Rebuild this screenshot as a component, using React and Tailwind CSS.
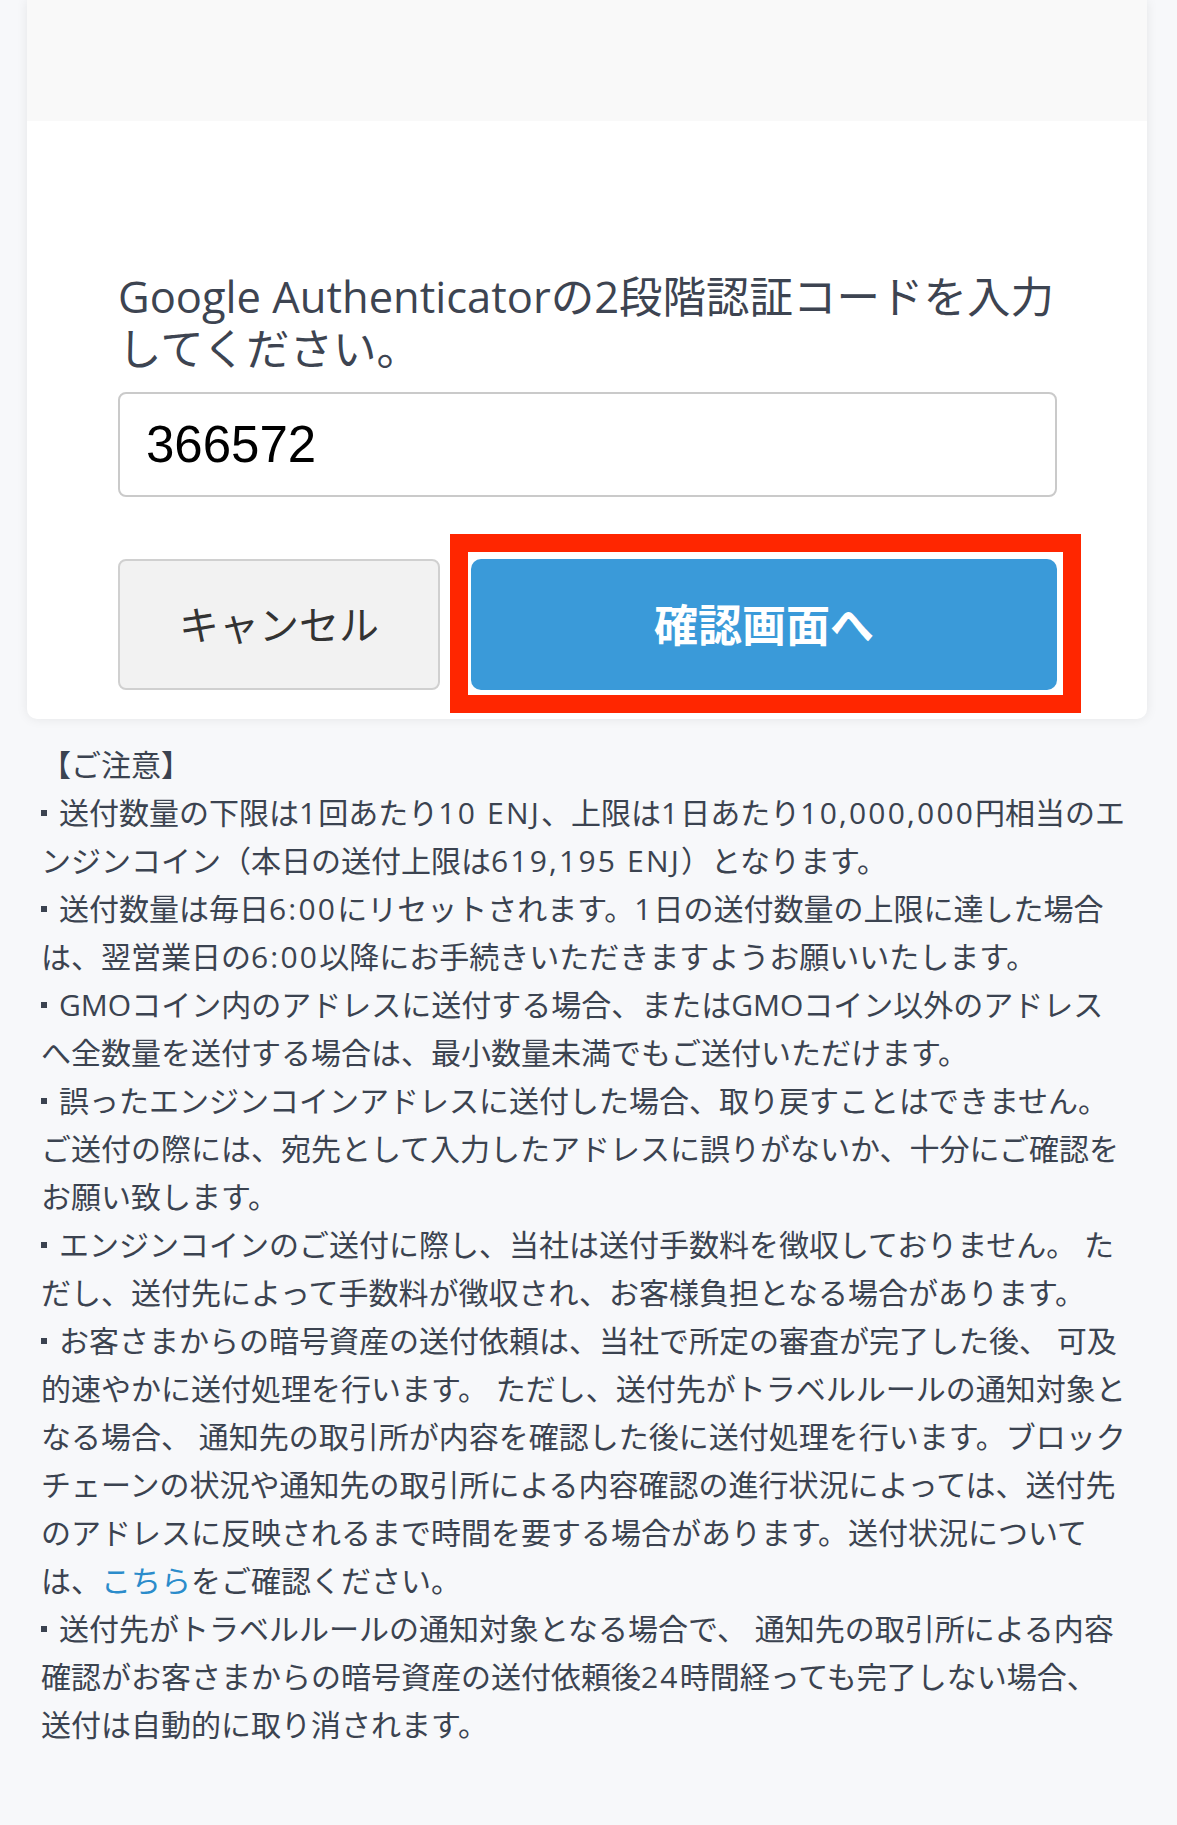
import { useState } from "react";

const Dot = () => (
  <span className="inline-block w-[18px] align-middle">
    <span className="block w-[6px] h-[6px] bg-[#3b4350] mb-[6px]" />
  </span>
);

// numbers in the notes run a bit wider than the default font gives
const N = ({ children }) => <span className="tracking-[2.2px]">{children}</span>;

const App = () => {
  const [code, setCode] = useState("366572");

  return (
    <div className="min-h-[1825px] bg-[#f7f8fa] font-['Open_Sans','Noto_Sans_CJK_JP',sans-serif]">
      <div className="ml-[27px] mr-[30px] bg-white rounded-b-[10px] shadow-[0_0_12px_rgba(0,0,0,0.08)]">
        <div className="h-[121px] bg-[#f9f9f9]" />

        <div className="pt-[150px] pb-[29px] pl-[91px] pr-[90px]">
          <p className="text-[43.5px] leading-[52px] text-[#3d4451] mb-[17px] whitespace-nowrap">
            Google Authenticatorの2段階認証コードを入力
            <br />
            してください。
          </p>

          <input
            value={code}
            onChange={(e) => setCode(e.target.value)}
            className="block w-full h-[105px] border-2 border-[#cacaca] rounded-[8px] px-[26px] text-[51px] text-black font-['Liberation_Sans',sans-serif] outline-none"
          />

          <div className="mt-[62px] flex gap-[31px] h-[131px]">
            <button className="w-[322px] h-full border-2 border-[#d0d0d0] bg-[#f2f2f2] rounded-[8px] text-[40px] text-[#333]">
              キャンセル
            </button>
            <div className="relative flex-1">
              <button className="w-full h-full rounded-[10px] bg-[#3a9ad9] text-white text-[44px] font-bold">
                確認画面へ
              </button>
              {/* annotation box */}
              <div className="absolute -left-[21px] -top-[25px] -right-[24px] -bottom-[23px] border-[18px] border-[#ff2600] pointer-events-none" />
            </div>
          </div>
        </div>
      </div>

      <div className="pt-[22px] px-[41px] text-[30px] leading-[48px] text-[#3b4350] whitespace-nowrap">
        <div>【ご注意】</div>
        <div>
          <Dot />
          送付数量の下限は<N>1</N>回あたり<N>10 ENJ</N>、上限は<N>1</N>日あたり<N>10,000,000</N>円相当のエ
        </div>
        <div>
          ンジンコイン（本日の送付上限は<N>619,195 ENJ</N>）となります。
        </div>
        <div>
          <Dot />
          送付数量は毎日<N>6:00</N>にリセットされます。<N>1</N>日の送付数量の上限に達した場合
        </div>
        <div>
          は、翌営業日の<N>6:00</N>以降にお手続きいただきますようお願いいたします。
        </div>
        <div>
          <Dot />
          GMOコイン内のアドレスに送付する場合、またはGMOコイン以外のアドレス
        </div>
        <div>へ全数量を送付する場合は、最小数量未満でもご送付いただけます。</div>
        <div>
          <Dot />
          誤ったエンジンコインアドレスに送付した場合、取り戻すことはできません。
        </div>
        <div>ご送付の際には、宛先として入力したアドレスに誤りがないか、十分にご確認を</div>
        <div>お願い致します。</div>
        <div>
          <Dot />
          エンジンコインのご送付に際し、当社は送付手数料を徴収しておりません。 た
        </div>
        <div>だし、送付先によって手数料が徴収され、お客様負担となる場合があります。</div>
        <div>
          <Dot />
          お客さまからの暗号資産の送付依頼は、当社で所定の審査が完了した後、 可及
        </div>
        <div>的速やかに送付処理を行います。 ただし、送付先がトラベルルールの通知対象と</div>
        <div>なる場合、 通知先の取引所が内容を確認した後に送付処理を行います。ブロック</div>
        <div>チェーンの状況や通知先の取引所による内容確認の進行状況によっては、送付先</div>
        <div>のアドレスに反映されるまで時間を要する場合があります。送付状況について</div>
        <div>
          は、<span className="text-[#2b8ccb]">こちら</span>をご確認ください。
        </div>
        <div>
          <Dot />
          送付先がトラベルルールの通知対象となる場合で、 通知先の取引所による内容
        </div>
        <div>
          確認がお客さまからの暗号資産の送付依頼後<N>24</N>時間経っても完了しない場合、
        </div>
        <div>送付は自動的に取り消されます。</div>
      </div>
    </div>
  );
};

export default App;
